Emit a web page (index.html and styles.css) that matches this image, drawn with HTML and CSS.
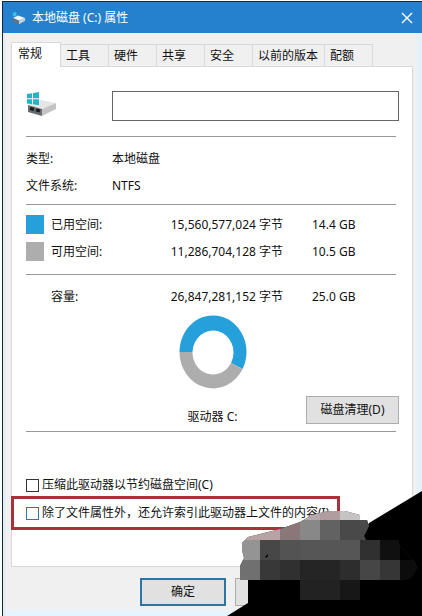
FILE: index.html
```html
<!DOCTYPE html>
<html lang="zh-CN">
<head>
    <meta charset="UTF-8">
    <meta name="viewport" content="width=device-width, initial-scale=1.0">
    <title>本地磁盘 (C:) 属性</title>
    <link rel="stylesheet" href="styles.css">
</head>
<body>
    <main class="window">
        <!-- 标题栏 -->
        <header class="titlebar">
            <svg class="title-icon" viewBox="0 0 16 14" aria-hidden="true">
                <path d="M1 1l4-1v5H1z" fill="#35c3ea"/>
                <path d="M1 7l6-3 8 3-7 3z" fill="#eef3f6"/>
                <path d="M1 7l7 3v4l-7-3z" fill="#5d7482"/>
                <path d="M8 10l7-3v3l-7 4z" fill="#c3d3de"/>
            </svg>
            <h1>本地磁盘 (C:) 属性</h1>
            <button type="button" class="close" aria-label="关闭">
                <svg viewBox="0 0 12 12" aria-hidden="true"><path d="M1 1l10 10M11 1L1 11" stroke="#fff" stroke-width="1.4"/></svg>
            </button>
        </header>

        <div class="content">
            <!-- 选项卡 -->
            <nav class="tabs" role="tablist">
                <button type="button" class="tab active" role="tab" aria-selected="true">常规</button>
                <button type="button" class="tab" role="tab">工具</button>
                <button type="button" class="tab" role="tab">硬件</button>
                <button type="button" class="tab" role="tab">共享</button>
                <button type="button" class="tab" role="tab">安全</button>
                <button type="button" class="tab wide" role="tab">以前的版本</button>
                <button type="button" class="tab" role="tab">配额</button>
            </nav>

            <section class="panel">
                <div class="identity">
                    <svg class="drive-icon" viewBox="0 0 30 26" aria-hidden="true">
                        <path d="M2 14l13-5 15 3-14 6z" fill="#e6e6e6"/>
                        <path d="M2 14l14 4v7L2 21z" fill="#6a6d6f"/>
                        <path d="M16 18l14-6v6l-14 7z" fill="#c4c4c4"/>
                        <path d="M4 17.500l4 1M10 19l4 1" stroke="#181c1e" stroke-width="3"/>
                        <path d="M1 3l5-.8v5H1zM7 2l6-1v6.200H7zM1 8.200h5v5l-5-.7zM7 8.200h6v6l-6-.9z" fill="#25b3c8"/>
                    </svg>
                    <input type="text" class="name-input" aria-label="卷标">
                </div>

                <hr>

                <dl class="info">
                    <dt>类型:</dt>
                    <dd>本地磁盘</dd>
                    <dt>文件系统:</dt>
                    <dd>NTFS</dd>
                </dl>

                <hr>

                <!-- 空间使用 -->
                <table class="usage">
                    <tbody class="spaces">
                        <tr>
                            <td class="key"><span class="swatch used"></span></td>
                            <th scope="row">已用空间:</th>
                            <td class="bytes">15,560,577,024 字节</td>
                            <td class="size">14.4 GB</td>
                        </tr>
                        <tr>
                            <td class="key"><span class="swatch free"></span></td>
                            <th scope="row">可用空间:</th>
                            <td class="bytes">11,286,704,128 字节</td>
                            <td class="size">10.5 GB</td>
                        </tr>
                    </tbody>
                    <tbody class="total">
                        <tr>
                            <td class="key"></td>
                            <th scope="row">容量:</th>
                            <td class="bytes">26,847,281,152 字节</td>
                            <td class="size">25.0 GB</td>
                        </tr>
                    </tbody>
                </table>

                <div class="chart">
                    <svg class="donut" viewBox="0 0 68 74" aria-hidden="true">
                        <path d="M0.500 37A33.500 36.500 0 1 1 63.600 54L52 48A20.500 22 0 1 0 13.500 37z" fill="#26a0da"/>
                        <path d="M0.500 37A33.500 36.500 0 0 0 63.600 54L52 48A20.500 22 0 0 1 13.500 37z" fill="#adadad"/>
                    </svg>
                    <span class="drive-name">驱动器 C:</span>
                    <button type="button" class="btn cleanup">磁盘清理(D)</button>
                </div>

                <hr>

                <div class="options">
                    <label class="option"><input type="checkbox">压缩此驱动器以节约磁盘空间(C)</label>
                    <label class="option marked"><input type="checkbox">除了文件属性外，还允许索引此驱动器上文件的内容(I)</label>
                </div>
            </section>
        </div>

        <footer class="actions">
            <button type="button" class="btn primary">确定</button>
            <button type="button" class="btn" aria-label="取消"></button>
        </footer>

        <!-- 右下角遮挡 -->
        <svg class="mosaic" viewBox="227 466 195 150" aria-hidden="true">
            <path d="M422 491L369 523L360 545L248 579V603L227 616H422z" fill="#000"/>
            <clipPath id="blob">
                <path d="M240 580V566L244 558L242 550V543L248 537L260 534L280 529L300 522L312 515L328 511H345L360 515V520H367L369 526L364 536L366 540H398L400 546L415 562L417 568L411 578L400 580H360V600H300V580z"/>
            </clipPath>
            <g clip-path="url(#blob)" shape-rendering="crispEdges">
                <path d="M240 510h180v90H240z" fill="#333"/>
                <path d="M240 520h40v20h-40z" fill="#b9a2a5"/>
                <path d="M280 520h20v20h-20z" fill="#8b7779"/>
                <path d="M300 510h20v10h-20z" fill="#b5a9ab"/>
                <path d="M320 510h20v10h-20z" fill="#b19da0"/>
                <path d="M340 510h20v10h-20z" fill="#c5c3c4"/>
                <path d="M300 520h20v20h-20z" fill="#888"/>
                <path d="M320 520h20v20h-20z" fill="#626262"/>
                <path d="M340 520h30v20h-30z" fill="#494949"/>
                <path d="M240 540h20v20h-20z" fill="#949494"/>
                <path d="M260 540h20v20h-20z" fill="#474747"/>
                <path d="M280 540h20v20h-20z" fill="#535353"/>
                <path d="M300 540h60v20h-60z" fill="#565656"/>
                <path d="M360 540h20v20h-20z" fill="#303030"/>
                <path d="M380 540h20v20h-20z" fill="#101010"/>
                <path d="M400 540h20v20h-20z" fill="#000"/>
                <path d="M240 560h20v20h-20z" fill="#707070"/>
                <path d="M260 560h20v20h-20z" fill="#383838"/>
                <path d="M280 560h20v20h-20z" fill="#303030"/>
                <path d="M300 560h40v20h-40z" fill="#252525"/>
                <path d="M340 560h20v20h-20z" fill="#2d2d2d"/>
                <path d="M360 560h20v20h-20z" fill="#464646"/>
                <path d="M380 560h20v20h-20z" fill="#363636"/>
                <path d="M400 560h20v20h-20z" fill="#0c0c0c"/>
                <path d="M300 580h40v20h-40z" fill="#222"/>
                <path d="M340 580h20v20h-20z" fill="#171717"/>
            </g>
            <path d="M265 557l3-3v2l-2 2z" fill="#000"/>
        </svg>
    </main>
</body>
</html>
```

FILE: styles.css
```css
* {
    box-sizing: border-box;
}
body {
    margin: 0;
    padding: 1px 0 0 2px;
    background: #fff;
    color: #111;
    font: 12px/18px "Noto Sans", "Noto Sans CJK SC", sans-serif;
}
button, input {
    font: inherit;
    color: inherit;
    margin: 0;
}
button {
    padding: 0;
}
.window {
    position: relative;
    display: flex;
    flex-direction: column;
    min-height: calc(100vh - 1px);
    background: #f0f0f0;
    border-top: 1px solid #10283c;
    border-left: 1px solid #10283c;
    box-shadow: inset -5px 0 #e3f1fb, inset 2px 0 #e3ecf3, inset 0 -6px #e6f4fd;
}

/* 标题栏 */
.titlebar {
    display: flex;
    align-items: center;
    height: 31px;
    padding: 0 9px;
    background: #2581cd;
    color: #fff;
}
.title-icon {
    width: 14px;
    height: 14px;
    margin-right: 6px;
}
.titlebar h1 {
    flex: 1;
    margin: 0;
    font-size: 12px;
    font-weight: normal;
}
.close {
    display: flex;
    border: 0;
    background: none;
}
.close svg {
    width: 12px;
    height: 12px;
}

.content {
    flex: 1;
    display: flex;
    flex-direction: column;
    padding: 9px 9px 0 8px;
}

/* 选项卡 */
.tabs {
    display: flex;
    align-items: flex-end;
}
.tab {
    width: 48px;
    height: 22px;
    padding-left: 5px;
    border: 1px solid #d9d9d9;
    border-width: 1px 1px 0 0;
    background: #f0f0f0;
    text-align: left;
}
.tab.wide {
    width: 72px;
}
.tab.active {
    position: relative;
    width: 50px;
    height: 25px;
    margin-bottom: -1px;
    padding: 0 0 3px 6px;
    border-left-width: 1px;
    background: #fff;
}

.panel {
    flex: 1;
    padding: 24px 13px 0 14px;
    border: 1px solid #d9d9d9;
    background: #fff;
}
hr {
    height: 1px;
    margin: 0 3px 0 0;
    border: 0;
    background: #999;
}
.identity {
    display: flex;
    align-items: flex-start;
    margin-bottom: 15px;
}
.drive-icon {
    width: 30px;
    height: 26px;
    margin-right: 56px;
}
.name-input {
    flex: 1;
    min-width: 0;
    height: 30px;
    border: 1px solid #666;
    background: #fff;
}
.info {
    display: grid;
    grid-template-columns: 86px 1fr;
    margin: 8px 0 5px;
    line-height: 27px;
}
.info dd {
    margin: 0;
}

/* 空间使用 */
.usage {
    width: calc(100% - 3px);
    margin: 6px 0 5px;
    border-collapse: collapse;
    line-height: 27px;
}
.usage td, .usage th {
    padding: 0;
    font-weight: normal;
    text-align: left;
    white-space: nowrap;
}
.usage .key {
    width: 25px;
}
.usage th {
    width: 100px;
}
.usage .bytes {
    width: 132px;
    text-align: right;
}
.usage .size {
    padding-left: 29px;
}
.swatch {
    display: block;
    width: 18px;
    height: 19px;
}
.swatch.used {
    background: #26a0da;
}
.swatch.free {
    background: #adadad;
}
.spaces tr:last-child > * {
    padding-bottom: 9px;
}
.total {
    border-top: 1px solid #999;
}
.total tr > * {
    padding-top: 8px;
}

.chart {
    display: grid;
    grid-template-columns: 1fr auto 1fr;
    row-gap: 5px;
    align-items: center;
    margin-bottom: 5px;
}
.donut {
    grid-column: 2;
    justify-self: center;
    width: 68px;
    height: 74px;
}
.drive-name {
    grid-row: 2;
    grid-column: 2;
    padding-top: 14px;
    text-align: center;
}
.btn {
    height: 28px;
    border: 1px solid #adadad;
    background: #e1e1e1;
}
.cleanup {
    grid-row: 2;
    grid-column: 3;
    justify-self: end;
    width: 93px;
}

.options {
    display: flex;
    flex-direction: column;
    align-items: flex-start;
    padding-top: 42px;
}
.option {
    display: flex;
    align-items: center;
    height: 22px;
    white-space: nowrap;
}
.option input {
    appearance: none;
    width: 13px;
    height: 13px;
    margin-right: 3px;
    border: 1px solid #333;
    background: #fff;
}
.option.marked {
    height: 34px;
    margin-left: -15px;
    padding: 0 8px 0 12px;
    border: 3px solid #a8323c;
}
.option.marked input {
    border-color: #2b7a9b;
}

.actions {
    display: flex;
    gap: 9px;
    padding: 11px 0 10px 137px;
}
.actions .btn {
    width: 86px;
}
.btn.primary {
    border: 2px solid #2e75a3;
}

.mosaic {
    position: absolute;
    right: 0;
    bottom: 0;
    width: 195px;
    height: 150px;
}
```
